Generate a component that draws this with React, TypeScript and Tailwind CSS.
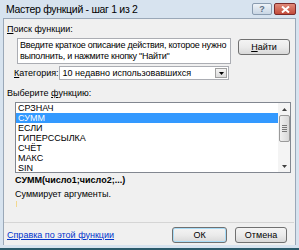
import React from "react";

const items = ["СРЗНАЧ", "СУММ", "ЕСЛИ", "ГИПЕРССЫЛКА", "СЧЁТ", "МАКС", "SIN"];

function Btn({ children, className = "" }: { children: React.ReactNode; className?: string }) {
  return (
    <div
      className={
        "flex shrink-0 items-center justify-center rounded-[3px] border border-[#707070] bg-gradient-to-b from-[#f4f4f4] via-[#ebebeb] to-[#d9d9d9] text-black " +
        className
      }
    >
      {children}
    </div>
  );
}

export default function App() {
  return (
    <div
      className="relative flex h-[250px] w-[299px] flex-col overflow-hidden bg-[#d7e3ef] text-[9px] leading-none text-black whitespace-nowrap"
      style={{ fontFamily: "'Liberation Sans', Arial, sans-serif" }}
    >
      {/* title bar */}
      <div className="flex h-[18px] shrink-0 items-center pl-[6px] pr-[3px]">
        <span className="text-[10.5px] tracking-[-0.3px] text-black">Мастер функций - шаг 1 из 2</span>
        <div className="ml-auto flex gap-[2px]">
          <div className="flex h-[12px] w-[20px] items-center justify-center rounded-[2px] border border-[#8a9cb0] bg-gradient-to-b from-[#eef3f8] to-[#c9d6e4] text-[9px] font-bold text-[#5c6e84]">
            ?
          </div>
          <div className="flex h-[12px] w-[22px] items-center justify-center rounded-[2px] border border-[#7a2a2a] bg-gradient-to-b from-[#e08a7a] to-[#c24a3a]">
            <svg width="9" height="7" viewBox="0 0 9 7">
              <path d="M1 0.5 L8 6.5 M8 0.5 L1 6.5" stroke="white" strokeWidth="2" />
            </svg>
          </div>
        </div>
      </div>
      {/* body */}
      <div className="mx-[3px] flex h-[227px] shrink-0 flex-col border-x border-t border-[#9aa8b8] bg-[#f0f0f0] pl-[3px] pr-[4px]">
        <div className="mt-[4px] h-[12px] leading-[12px]">
          <span className="underline">П</span>оиск функции:
        </div>
        <div className="mt-[3px] flex h-[26px]">
          <div className="ml-[10px] flex h-[26px] w-[214px] flex-col overflow-hidden border border-[#abadb3] bg-white px-[2px] pt-[1px] leading-[11px] tracking-[-0.25px]">
            <div>Введите краткое описание действия, которое нужно</div>
            <div>выполнить, и нажмите кнопку "Найти"</div>
          </div>
          <Btn className="ml-[7px] mt-[1px] h-[16px] w-[52px]">
            <span>
              <span className="underline">Н</span>айти
            </span>
          </Btn>
        </div>
        <div className="mt-[2px] flex h-[14px] items-center">
          <span className="ml-[7px]">
            <span className="underline">К</span>атегория:
          </span>
          <div className="ml-auto mr-[62px] flex h-[14px] w-[172px] items-center border border-[#abadb3] bg-white pl-[3px]">
            <span>10 недавно использовавшихся</span>
            <div className="ml-auto mr-[1px] flex h-[10px] w-[12px] items-center justify-center border border-[#a0a0a0] bg-gradient-to-b from-[#f4f4f4] to-[#dcdcdc]">
              <svg width="5" height="3" viewBox="0 0 5 3">
                <path d="M0 0 H5 L2.5 3 Z" fill="black" />
              </svg>
            </div>
          </div>
        </div>
        <div className="mt-[7px] h-[12px] leading-[12px]">
          Выберите <span className="underline">ф</span>ункцию:
        </div>
        <div className="ml-[8px] mt-[3px] flex h-[71px] border border-[#828790] bg-white">
          <div className="flex flex-1 flex-col">
            {items.map((it) => (
              <div
                key={it}
                className={
                  "h-[10px] pl-[2px] leading-[10px] " +
                  (it === "СУММ" ? "bg-[#3399ff] text-white" : "")
                }
              >
                {it}
              </div>
            ))}
          </div>
          <div className="flex w-[12px] flex-col items-center bg-[#f4f4f4]">
            <div className="flex h-[12px] items-center">
              <svg width="5" height="3" viewBox="0 0 5 3">
                <path d="M0 3 H5 L2.5 0 Z" fill="#404040" />
              </svg>
            </div>
            <div className="flex h-[27px] w-[11px] flex-col items-center justify-center gap-[1px] rounded-[2px] border border-[#9a9a9a] bg-gradient-to-r from-[#f0f0f0] to-[#d8d8d8]">
              <div className="h-px w-[5px] bg-[#777]" />
              <div className="h-px w-[5px] bg-[#777]" />
              <div className="h-px w-[5px] bg-[#777]" />
              <div className="h-px w-[5px] bg-[#777]" />
            </div>
            <div className="mt-auto flex h-[12px] items-center">
              <svg width="5" height="3" viewBox="0 0 5 3">
                <path d="M0 0 H5 L2.5 3 Z" fill="#404040" />
              </svg>
            </div>
          </div>
        </div>
        <div className="ml-[8px] mt-[1px] h-[12px] font-bold leading-[12px]">СУММ(число1;число2;...)</div>
        <div className="ml-[8px] mt-[2px] h-[12px] leading-[12px]">Суммирует аргументы.</div>
        <div className="ml-[9px] mt-[1px] h-[6px] w-px bg-[#f2d890]" />
        <div className="mt-[15px] h-px -mx-[3px] bg-[#d5d5d5]" />
        <div className="mt-[4px] flex h-[16px] items-center">
          <span className="text-[#0033cc] underline">Справка по этой функции</span>
          <Btn className="ml-auto h-[16px] w-[55px] border-[#3c7fb1] shadow-[inset_0_0_0_1px_#a8dcf7]">ОК</Btn>
          <Btn className="ml-[8px] mr-[4px] h-[16px] w-[52px]">Отмена</Btn>
        </div>
      </div>
      <div className="h-[3px] shrink-0 bg-[#d7e3ef]" />
      <div className="h-[2px] shrink-0 bg-[#2a5a6a]" />
    </div>
  );
}
